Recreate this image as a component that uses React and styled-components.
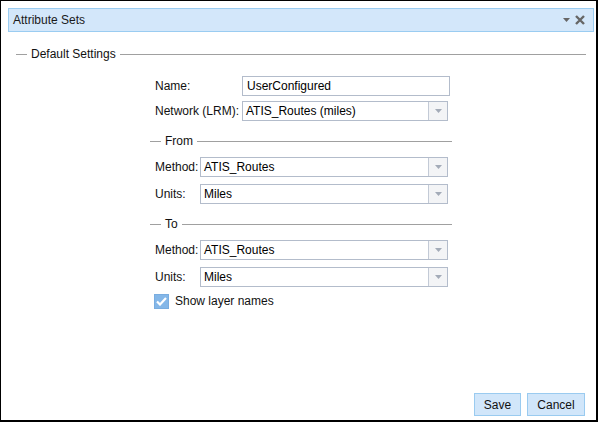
import React from "react";
import styled, { createGlobalStyle } from "styled-components";

const Global = createGlobalStyle`
  html, body { margin: 0; padding: 0; background: #fff; }
  body { font-family: "Liberation Sans", Arial, sans-serif; font-size: 12px; color: #000; }
  * { box-sizing: border-box; }
`;

const Frame = styled.div`
  width: 598px;
  height: 422px;
  border: 1px solid #000;
  border-right-width: 2px;
  border-bottom-width: 2px;
  display: flex;
  flex-direction: column;
  background: #fff;
`;

const Header = styled.div`
  margin: 7px 2px 0 7px;
  height: 24px;
  background: #d3e7fa;
  border: 1px solid #9accf1;
  display: flex;
  align-items: center;
  padding: 0 8px 0 4px;
`;

const Title = styled.div`
  flex: 1;
  font-size: 12px;
  color: #1a1a1a;
`;

const Tools = styled.div`
  display: flex;
  align-items: center;
  gap: 5px;
  color: #666;
`;

const Body = styled.div`
  flex: 1;
  display: flex;
  flex-direction: column;
  padding: 15px 10px 0 15px;
`;

const LegendRow = styled.div`
  display: flex;
  align-items: center;
  height: 14px;
  margin-top: ${(p) => p.$mt || 0}px;
`;

const LegendDash = styled.div`
  width: ${(p) => p.$w || 11}px;
  height: 1px;
  background: #a0a0a0;
`;

const LegendLine = styled.div`
  flex: 1;
  height: 1px;
  background: #a0a0a0;
`;

const LegendText = styled.span`
  padding: 0 4px;
  color: #111;
  line-height: 14px;
`;

const Form = styled.div`
  margin-left: 134px;
  width: 302px;
  display: flex;
  flex-direction: column;
`;

const Row = styled.div`
  display: flex;
  align-items: center;
  height: 20px;
  padding-left: 5px;
  margin-top: ${(p) => p.$mt || 0}px;
`;

const Label = styled.div`
  width: ${(p) => p.$w}px;
  color: #111;
  white-space: nowrap;
`;

const TextInput = styled.div`
  width: 208px;
  height: 20px;
  border: 1px solid #b3bccb;
  padding: 0 4px;
  display: flex;
  align-items: center;
  color: #000;
`;

const Select = styled.div`
  width: ${(p) => p.$w}px;
  height: 20px;
  border: 1px solid #b3bccb;
  display: flex;
  align-items: stretch;
`;

const SelectText = styled.div`
  flex: 1;
  padding: 0 3px;
  display: flex;
  align-items: center;
`;

const Trigger = styled.div`
  width: 19px;
  border-left: 1px solid #c3cad6;
  background: #f3f4f6;
  display: flex;
  align-items: center;
  justify-content: center;
`;

const CheckRow = styled.label`
  display: flex;
  align-items: center;
  gap: 6px;
  height: 16px;
  padding-left: 4px;
  margin-top: 6px;
  color: #111;
`;

const CheckBox = styled.span`
  width: 15px;
  height: 15px;
  background: #84b7e8;
  border: 1px solid #79ade0;
  display: flex;
  align-items: center;
  justify-content: center;
`;

const Footer = styled.div`
  display: flex;
  justify-content: flex-end;
  gap: 6px;
  padding: 0 11px 4px 0;
`;

const Button = styled.button`
  height: 23px;
  width: ${(p) => p.$w}px;
  background: #d1e6fa;
  border: 1px solid #9acbf0;
  font-family: "Liberation Sans", Arial, sans-serif;
  font-size: 12px;
  color: #111;
  padding: 0;
  cursor: pointer;
`;

const Arrow = () => (
  <svg width="7" height="4" viewBox="0 0 7 4">
    <polygon points="0,0 7,0 3.5,4" fill="#a3abb8" />
  </svg>
);

const Dropdown = ({ w, value }) => (
  <Select $w={w}>
    <SelectText>{value}</SelectText>
    <Trigger>
      <Arrow />
    </Trigger>
  </Select>
);

const Legend = ({ text, mt }) => (
  <LegendRow $mt={mt}>
    <LegendDash $w={11} />
    <LegendText>{text}</LegendText>
    <LegendLine />
  </LegendRow>
);

export default function App() {
  return (
    <>
      <Global />
      <Frame>
        <Header>
          <Title>Attribute Sets</Title>
          <Tools>
            <svg width="7" height="4" viewBox="0 0 7 4">
              <polygon points="0,0 7,0 3.5,4" fill="#666" />
            </svg>
            <svg width="10" height="10" viewBox="0 0 10 10">
              <path d="M1 1 L9 9 M9 1 L1 9" stroke="#666" strokeWidth="2.4" />
            </svg>
          </Tools>
        </Header>
        <Body>
          <Legend text="Default Settings" />
          <Form>
            <Row $mt={15}>
              <Label $w={87}>Name:</Label>
              <TextInput>UserConfigured</TextInput>
            </Row>
            <Row $mt={5}>
              <Label $w={87}>Network (LRM):</Label>
              <Dropdown w={206} value="ATIS_Routes (miles)" />
            </Row>
            <Legend text="From" mt={13} />
            <Row $mt={9}>
              <Label $w={45}>Method:</Label>
              <Dropdown w={248} value="ATIS_Routes" />
            </Row>
            <Row $mt={7}>
              <Label $w={45}>Units:</Label>
              <Dropdown w={248} value="Miles" />
            </Row>
            <Legend text="To" mt={13} />
            <Row $mt={9}>
              <Label $w={45}>Method:</Label>
              <Dropdown w={248} value="ATIS_Routes" />
            </Row>
            <Row $mt={7}>
              <Label $w={45}>Units:</Label>
              <Dropdown w={248} value="Miles" />
            </Row>
            <CheckRow>
              <CheckBox>
                <svg width="11" height="9" viewBox="0 0 11 9">
                  <path d="M1 4.5 L4 7.5 L10 1" stroke="#fff" strokeWidth="2.2" fill="none" />
                </svg>
              </CheckBox>
              Show layer names
            </CheckRow>
          </Form>
        </Body>
        <Footer>
          <Button $w={47}>Save</Button>
          <Button $w={58}>Cancel</Button>
        </Footer>
      </Frame>
    </>
  );
}
